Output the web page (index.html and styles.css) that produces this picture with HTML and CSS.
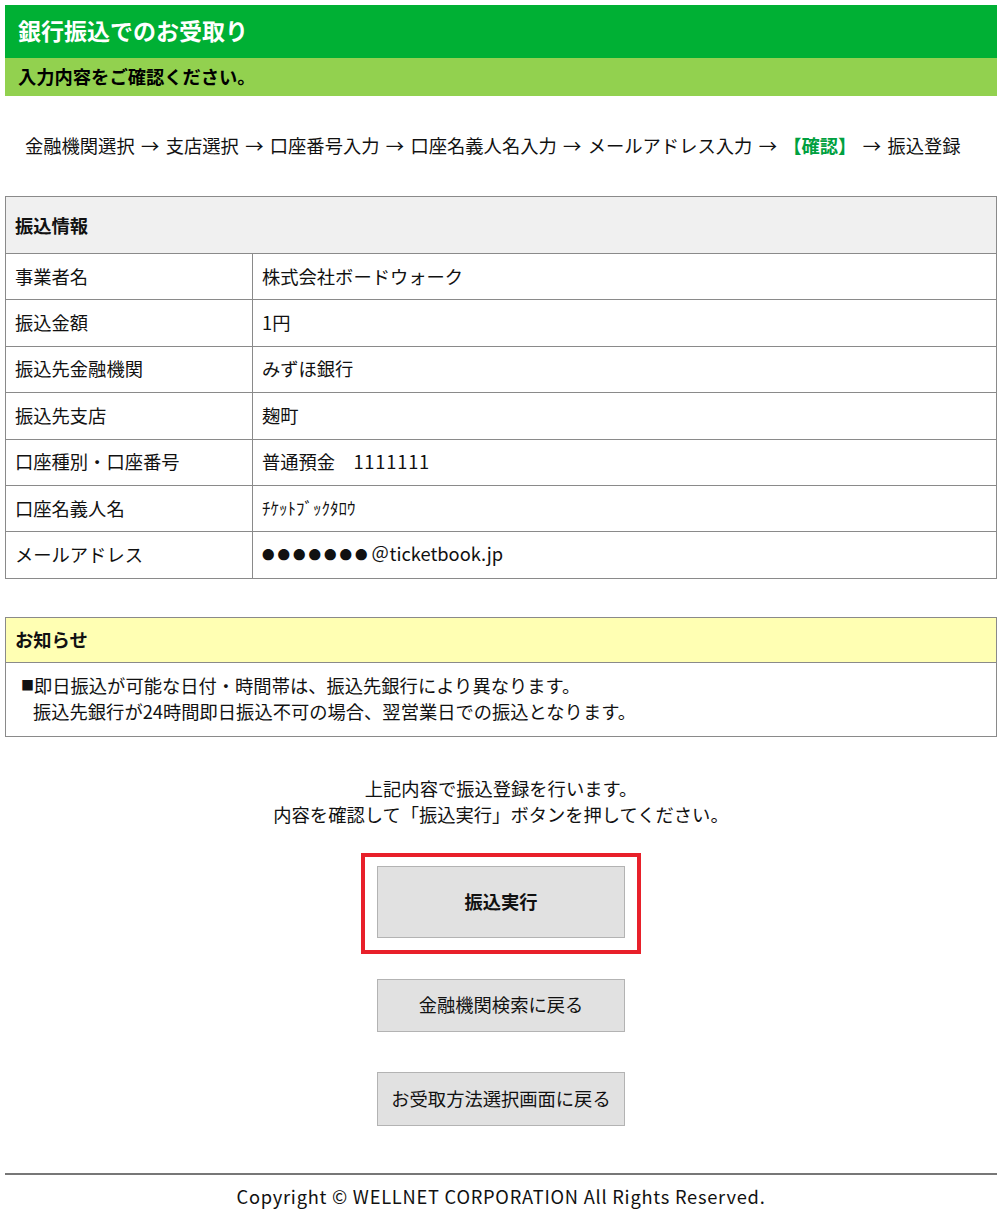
FILE: index.html
```html
<!DOCTYPE html>
<html lang="ja">
<head>
<meta charset="utf-8">
<title>銀行振込でのお受取り</title>
<link rel="stylesheet" href="styles.css">
</head>
<body>
<header class="page-head">
  <h1 class="title">銀行振込でのお受取り</h1>
  <p class="subtitle">入力内容をご確認ください。</p>
</header>

<p class="steps">金融機関選択<span class="arrow">→</span>支店選択<span class="arrow">→</span>口座番号入力<span class="arrow">→</span>口座名義人名入力<span class="arrow">→</span>メールアドレス入力<span class="arrow">→</span><span class="current">【確認】</span><span class="arrow">→</span>振込登録</p>

<table class="info">
  <thead>
    <tr><th colspan="2">振込情報</th></tr>
  </thead>
  <tbody>
    <tr><td class="label">事業者名</td><td>株式会社ボードウォーク</td></tr>
    <tr><td class="label">振込金額</td><td>1円</td></tr>
    <tr><td class="label">振込先金融機関</td><td>みずほ銀行</td></tr>
    <tr><td class="label">振込先支店</td><td>麹町</td></tr>
    <tr><td class="label">口座種別・口座番号</td><td>普通預金　<span class="latin">1111111</span></td></tr>
    <tr><td class="label">口座名義人名</td><td class="kana">ﾁｹｯﾄﾌﾞｯｸﾀﾛｳ</td></tr>
    <tr><td class="label">メールアドレス</td><td><span class="dots">●●●●●●●</span><span class="at">＠</span><span class="mail">ticketbook.jp</span></td></tr>
  </tbody>
</table>

<section class="notice">
  <h2 class="notice-head">お知らせ</h2>
  <div class="notice-body">
    <p><span class="mark">■</span>即日振込が可能な日付・時間帯は、振込先銀行により異なります。</p>
    <p>振込先銀行が24時間即日振込不可の場合、翌営業日での振込となります。</p>
  </div>
</section>

<p class="guide">上記内容で振込登録を行います。<br>内容を確認して「振込実行」ボタンを押してください。</p>

<div class="actions">
  <div class="highlight">
    <button class="btn btn-main" type="button">振込実行</button>
  </div>
  <button class="btn btn-sub" type="button">金融機関検索に戻る</button>
  <button class="btn btn-sub btn-last" type="button">お受取方法選択画面に戻る</button>
</div>

<footer class="foot">
  <p>Copyright © WELLNET CORPORATION All Rights Reserved.</p>
</footer>
</body>
</html>
```

FILE: styles.css
```css
* { box-sizing: border-box; }

html, body {
  background: #ffffff;
}

body {
  margin: 5px;
  font-family: "Noto Sans CJK JP", "Noto Sans", sans-serif;
  font-size: 18.3px;
  color: #111111;
  line-height: 26px;
}

p, h1, h2 { margin: 0; }

.page-head {
  display: flex;
  flex-direction: column;
}

.title {
  background: #00b034;
  color: #ffffff;
  font-size: 23px;
  font-weight: bold;
  height: 53px;
  line-height: 51px;
  padding-left: 13px;
}

.subtitle {
  background: #92d14f;
  color: #000000;
  font-size: 18.3px;
  font-weight: bold;
  height: 38px;
  line-height: 37px;
  padding-left: 13px;
}

.steps {
  margin: 36px 0 38px;
  padding-left: 20px;
  white-space: nowrap;
}

.steps .arrow {
  display: inline-block;
  width: 31px;
  text-align: center;
}

.steps .current {
  color: #00a040;
  font-weight: bold;
}

.info {
  width: 100%;
  border-collapse: collapse;
  border: 1px solid #8a8a8a;
}

.info th {
  background: #f0f0f0;
  text-align: left;
  font-weight: bold;
  height: 57px;
  padding: 0 9px;
  border: 1px solid #8a8a8a;
}

.info td {
  height: 46.4px;
  padding: 0 9px 2px;
  border: 1px solid #8a8a8a;
  vertical-align: middle;
}

.info td.label {
  width: 247px;
}

.info td.kana {
  font-size: 17px;
}

.latin {
  letter-spacing: 0.8px;
}

.mail {
  letter-spacing: 0;
}

.dots {
  font-size: 12.5px;
  letter-spacing: 3px;
  vertical-align: 1px;
}

.at {
  display: inline-block;
  width: 19px;
  text-align: center;
}

.notice {
  margin-top: 38px;
  border: 1px solid #8a8a8a;
}

.notice-head {
  background: #ffffb3;
  font-size: 18.3px;
  font-weight: bold;
  height: 45px;
  line-height: 43px;
  padding-left: 9px;
  border-bottom: 1px solid #8a8a8a;
}

.notice-body {
  padding: 9px 12px 12px 27px;
}

.notice-body .mark {
  display: inline-block;
  width: 11px;
  margin-left: -12px;
  margin-right: 2px;
  font-size: 13px;
  vertical-align: top;
}

.guide {
  margin-top: 38px;
  text-align: center;
}

.actions {
  display: flex;
  flex-direction: column;
  align-items: center;
  margin-top: 26px;
}

.highlight {
  border: 4px solid #e8202a;
  padding: 9px 12px 12px;
}

.btn {
  width: 248px;
  background: #e1e1e1;
  border: 1px solid #b3b3b3;
  border-radius: 0;
  font-family: "Noto Sans CJK JP", "Noto Sans", sans-serif;
  font-size: 18.3px;
  color: #111111;
  padding: 0 0 2px;
  cursor: pointer;
}

.btn-main {
  display: block;
  height: 72px;
  font-weight: bold;
}

.btn-sub {
  height: 53px;
  margin-top: 25px;
}

.btn-last {
  height: 54px;
  margin-top: 40px;
}

.foot {
  margin-top: 47px;
  border-top: 2px solid #777777;
  padding-top: 8px;
  text-align: center;
  letter-spacing: 0.75px;
}
```
